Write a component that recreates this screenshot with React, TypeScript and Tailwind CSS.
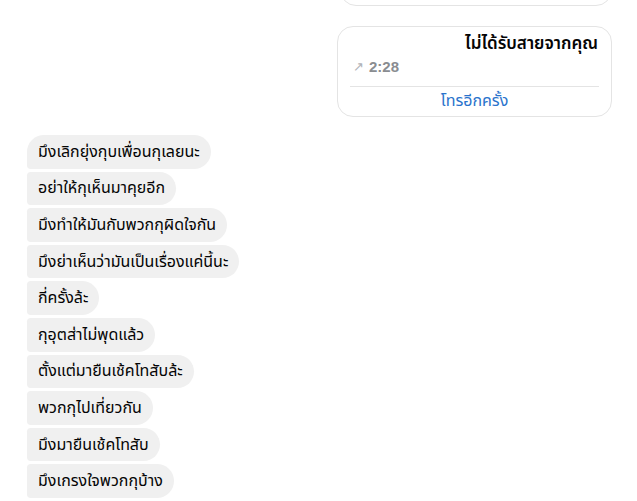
const messages = [
  "มึงเลิกยุ่งกุบเพื่อนกุเลยนะ",
  "อย่าให้กุเห็นมาคุยอีก",
  "มึงทำให้มันกับพวกกุผิดใจกัน",
  "มึงย่าเห็นว่ามันเป็นเรื่องแค่นี้นะ",
  "กี่ครั้งล้ะ",
  "กุอุตส่าไม่พุดแล้ว",
  "ตั้งแต่มายืนเช้คโทสับล้ะ",
  "พวกกุไปเที่ยวกัน",
  "มึงมายืนเช้คโทสับ",
  "มึงเกรงใจพวกกุบ้าง",
]

export default function App() {
  return (
    <div className="w-[637px] h-[501px] overflow-hidden bg-white text-[#050505] font-['Tahoma','Noto_Sans_Thai','Noto_Sans',sans-serif]">
      {/* previous call card, cut off at the top */}
      <div className="flex justify-end pr-[25px]">
        <div className="w-[272px] h-[56px] -mt-[50px] rounded-2xl border border-[#e4e4e4]" />
      </div>

      {/* missed call */}
      <div className="flex justify-end pr-[25px] mt-[20px]">
        <div className="w-[275px] h-[91px] rounded-2xl border border-[#e4e4e4] px-3 pt-[5px] flex flex-col">
          <div className="text-right text-[17px] leading-[24px] font-semibold pr-[1px]">ไม่ได้รับสายจากคุณ</div>
          <div className="flex items-center gap-[5px] text-[#8a8d91] leading-[22px] pl-[3px]">
            <span className="text-[#b0b3b8] text-[13px]">↗</span>
            <span className="font-['Liberation_Sans',sans-serif] font-bold text-[15px]">2:28</span>
          </div>
          <div className="mt-[8px] border-t border-[#e4e4e4]" />
          <div className="text-center text-[#2a73cc] text-[16px] leading-[28px]">โทรอีกครั้ง</div>
        </div>
      </div>

      {/* incoming messages */}
      <div className="flex flex-col items-start gap-[3px] pl-[27px] mt-[18px]">
        {messages.map((m, i) => (
          <div
            key={i}
            className={
              i === 0
                ? "bg-[#f0f0f0] rounded-[18px] rounded-bl-[4px] px-[11px] h-[33.6px] flex items-center text-[16px]"
                : "bg-[#f0f0f0] rounded-[18px] rounded-l-[4px] px-[11px] h-[33.6px] flex items-center text-[16px]"
            }
          >
            {m}
          </div>
        ))}
      </div>
    </div>
  )
}
